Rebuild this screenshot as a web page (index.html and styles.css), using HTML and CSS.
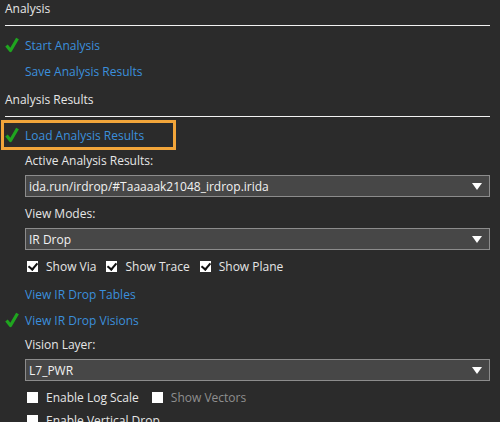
FILE: index.html
```html
<!DOCTYPE html>
<html lang="en">
<head>
  <meta charset="UTF-8">
  <title>Analysis</title>
  <link rel="stylesheet" href="styles.css">
</head>
<body>
  <div class="panel">
    <!-- Analysis -->
    <div class="section-title">Analysis</div>
    <div class="links">
      <div class="link-row"><span class="done"><svg width="14" height="16" viewBox="0 0 14 16"><path d="M1.5 8.5 L5.5 13.5 L12.5 1.5" /></svg></span><a class="link">Start Analysis</a></div>
      <div class="link-row"><span class="done"></span><a class="link">Save Analysis Results</a></div>
    </div>

    <!-- Analysis Results -->
    <div class="section-title second">Analysis Results</div>
    <div class="link-row focused"><span class="done"><svg width="14" height="16" viewBox="0 0 14 16"><path d="M1.5 8.5 L5.5 13.5 L12.5 1.5" /></svg></span><a class="link">Load Analysis Results</a></div>

    <div class="field">
      <div class="label">Active Analysis Results:</div>
      <div class="select"><span>ida.run/irdrop/#Taaaaak21048_irdrop.irida</span><span class="arrow"></span></div>
    </div>

    <div class="field">
      <div class="label">View Modes:</div>
      <div class="select"><span>IR Drop</span><span class="arrow"></span></div>
    </div>

    <div class="checks">
      <label class="check"><span class="box on"></span>Show Via</label>
      <label class="check"><span class="box on"></span>Show Trace</label>
      <label class="check"><span class="box on"></span>Show Plane</label>
    </div>

    <div class="link-row"><span class="done"></span><a class="link">View IR Drop Tables</a></div>
    <div class="link-row"><span class="done"><svg width="14" height="16" viewBox="0 0 14 16"><path d="M1.5 8.5 L5.5 13.5 L12.5 1.5" /></svg></span><a class="link">View IR Drop Visions</a></div>

    <div class="field spaced">
      <div class="label">Vision Layer:</div>
      <div class="select"><span>L7_PWR</span><span class="arrow"></span></div>
    </div>

    <div class="checks wide">
      <label class="check"><span class="box"></span>Enable Log Scale</label>
      <label class="check disabled"><span class="box"></span>Show Vectors</label>
    </div>
    <div class="checks">
      <label class="check"><span class="box"></span>Enable Vertical Drop</label>
    </div>
  </div>
</body>
</html>
```

FILE: styles.css
```css
html, body {
  margin: 0;
  background: #2b2b2b;
  overflow: hidden;
}
body {
  font-family: "Open Sans", "Noto Sans", sans-serif;
  font-size: 12px;
  color: #e6e6e6;
}
.panel {
  width: 485px;
  padding-left: 5px;
}
.section-title {
  line-height: 18px;
  padding-bottom: 7px;
  border-bottom: 1px solid #f2f2f2;
}
.section-title.second {
  margin-top: 7px;
}
.links {
  padding-top: 6px;
}
.link-row {
  display: flex;
  align-items: center;
  height: 26px;
}
.done {
  width: 20px;
  height: 16px;
  display: flex;
  align-items: center;
}
.done path {
  fill: none;
  stroke: #1fa51f;
  stroke-width: 3.2;
  stroke-linejoin: round;
}
.link {
  color: #3b8fdc;
  cursor: pointer;
}
.focused {
  margin: 3px 0 2px -4px;
  width: 168px;
  height: 24px;
  padding-left: 1px;
  border: 3px solid #f2a53a;
}
.field {
  padding-left: 20px;
  margin-bottom: 8px;
}
.field.spaced {
  margin-top: 3px;
}
.label {
  line-height: 18px;
  margin-bottom: 5px;
}
.select {
  display: flex;
  align-items: center;
  justify-content: space-between;
  height: 20px;
  padding: 0 7px 0 3px;
  background: #474747;
  border: 1px solid #8c8c8c;
  color: #f2f2f2;
}
.arrow {
  width: 0;
  height: 0;
  border-left: 5px solid transparent;
  border-right: 5px solid transparent;
  border-top: 7px solid #ffffff;
}
.checks {
  display: flex;
  gap: 10px;
  height: 24px;
  align-items: center;
  padding-left: 22px;
  margin-top: -4px;
  margin-bottom: 3px;
}
.checks.wide {
  gap: 13px;
}
.check {
  display: flex;
  align-items: center;
  gap: 8px;
}
.check.disabled {
  color: #8f8f8f;
}
.box {
  width: 11px;
  height: 11px;
  background: #ffffff;
  position: relative;
}
.box.on::after {
  content: "";
  position: absolute;
  left: 3px;
  top: 0px;
  width: 4px;
  height: 7px;
  border-right: 2px solid #111;
  border-bottom: 2px solid #111;
  transform: rotate(40deg);
}
```
